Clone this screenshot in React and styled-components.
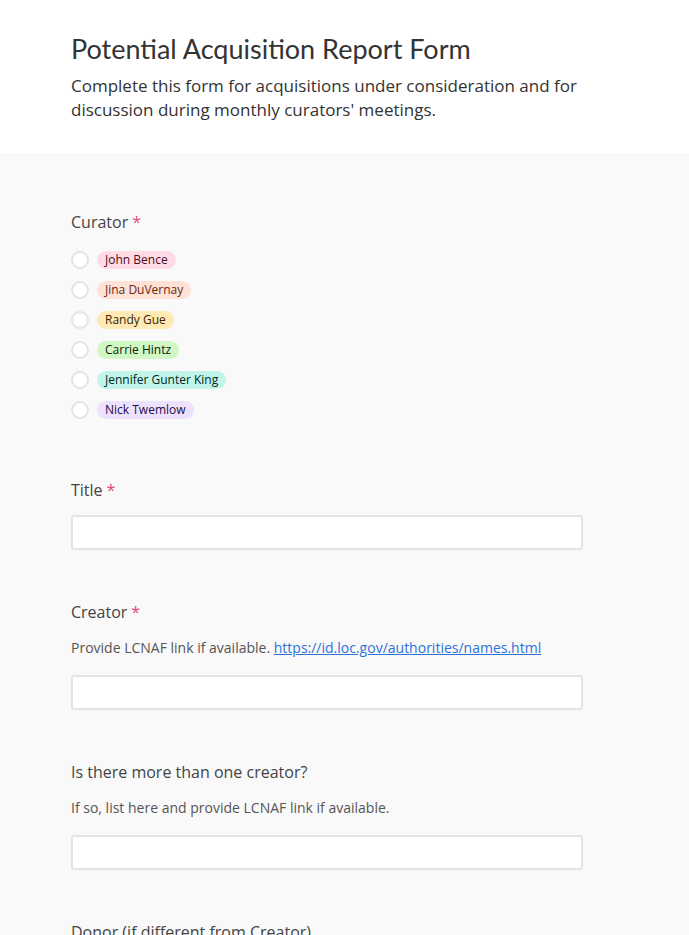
import React from "react";
import styled, { createGlobalStyle } from "styled-components";

const GlobalStyle = createGlobalStyle`
  html, body {
    margin: 0;
    padding: 0;
    background: #f9f9f9;
    font-family: "Open Sans", "Noto Sans", sans-serif;
    color: #333;
  }
`;

const Page = styled.div`
  min-height: 935px;
  background: #f9f9f9;
`;

const Header = styled.header`
  background: #fff;
  padding: 33px 71px 31px;
`;

const FormTitle = styled.h1`
  margin: 0;
  font-family: "Lato", "Noto Sans", sans-serif;
  font-size: 27px;
  line-height: 32px;
  font-weight: 400;
  color: #333;
`;

const FormDescription = styled.p`
  margin: 9px 0 0;
  max-width: 520px;
  font-size: 17px;
  line-height: 24px;
  color: #333;
`;

const Body = styled.main`
  padding: 57px 71px 0;
  display: flex;
  flex-direction: column;
  gap: 50px;
`;

const Field = styled.section`
  width: 512px;
`;

const Label = styled.div`
  font-size: 16px;
  line-height: 24px;
  color: #444;
`;

const Required = styled.span`
  color: #e3487a;
  margin-left: 4px;
`;

const Help = styled.div`
  margin-top: 14px;
  font-size: 14px;
  line-height: 20px;
  color: #555;

  a {
    color: #2d72d9;
    text-decoration: underline;
  }
`;

const Input = styled.input`
  display: block;
  box-sizing: border-box;
  width: 512px;
  height: 35px;
  margin-top: ${(p) => (p.$afterHelp ? "17px" : "13px")};
  border: 2px solid #e4e4e4;
  border-radius: 3px;
  background: #fff;
  outline: none;
`;

const RadioList = styled.div`
  margin-top: 11px;
  margin-bottom: 3px;
  display: flex;
  flex-direction: column;
`;

const Option = styled.label`
  display: flex;
  align-items: center;
  gap: 8px;
  height: 30px;
`;

const Radio = styled.span`
  box-sizing: border-box;
  width: 18px;
  height: 18px;
  border-radius: 50%;
  border: 2px solid #e4e4e4;
  background: #fff;
`;

const Pill = styled.span`
  display: inline-block;
  padding: 0 8px;
  height: 18px;
  line-height: 18px;
  border-radius: 9px;
  font-size: 12px;
  color: ${(p) => p.$fg};
  background: ${(p) => p.$bg};
`;

const curators = [
  { name: "John Bence", bg: "#ffdce5", fg: "#4c0c1c" },
  { name: "Jina DuVernay", bg: "#fee2d5", fg: "#6b2613" },
  { name: "Randy Gue", bg: "#ffeab6", fg: "#3b2501" },
  { name: "Carrie Hintz", bg: "#d1f7c4", fg: "#0b1d05" },
  { name: "Jennifer Gunter King", bg: "#c2f5e9", fg: "#012524" },
  { name: "Nick Twemlow", bg: "#ede2fe", fg: "#280b42" },
];

export default function App() {
  return (
    <Page>
      <GlobalStyle />
      <Header>
        <FormTitle>Potential Acquisition Report Form</FormTitle>
        <FormDescription>
          Complete this form for acquisitions under consideration and for
          discussion during monthly curators' meetings.
        </FormDescription>
      </Header>
      <Body>
        <Field>
          <Label>
            Curator<Required>*</Required>
          </Label>
          <RadioList>
            {curators.map((c) => (
              <Option key={c.name}>
                <Radio />
                <Pill $bg={c.bg} $fg={c.fg}>
                  {c.name}
                </Pill>
              </Option>
            ))}
          </RadioList>
        </Field>
        <Field>
          <Label>
            Title<Required>*</Required>
          </Label>
          <Input />
        </Field>
        <Field>
          <Label>
            Creator<Required>*</Required>
          </Label>
          <Help>
            Provide LCNAF link if available.{" "}
            <a href="#">https://id.loc.gov/authorities/names.html</a>
          </Help>
          <Input $afterHelp />
        </Field>
        <Field>
          <Label>Is there more than one creator?</Label>
          <Help>If so, list here and provide LCNAF link if available.</Help>
          <Input $afterHelp />
        </Field>
        <Field>
          <Label>Donor (if different from Creator)</Label>
        </Field>
      </Body>
    </Page>
  );
}
